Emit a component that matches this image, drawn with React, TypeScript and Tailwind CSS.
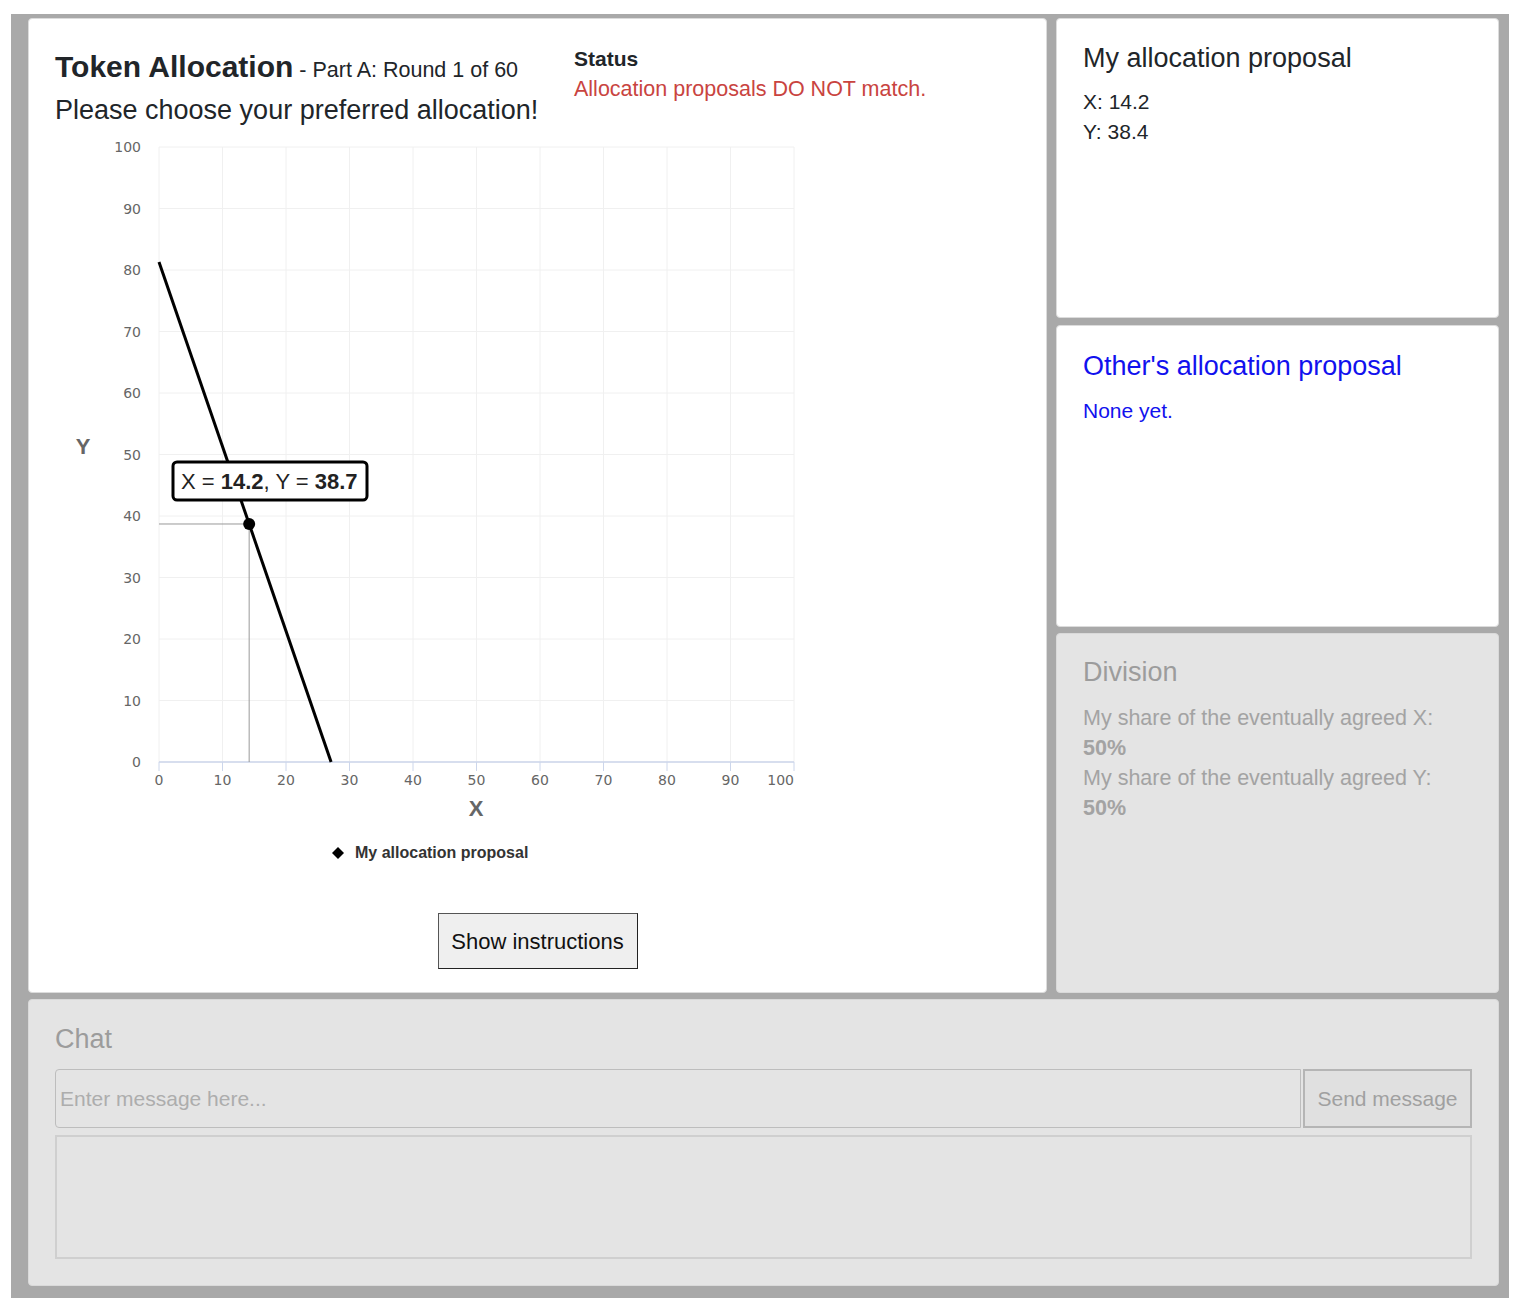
import React from "react";

const FONT = { fontFamily: '"Liberation Sans", Arial, sans-serif' };

// plot box inside the chart svg
const PX0 = 104;
const PY0 = 9;
const PW = 635;
const PH = 615;
const sx = (v: number) => PX0 + (v / 100) * PW;
const sy = (v: number) => PY0 + PH - (v / 100) * PH;
const TICKS = [0, 10, 20, 30, 40, 50, 60, 70, 80, 90, 100];

function AllocationChart() {
  const px = 14.2;
  const py = 38.7;
  return (
    <svg width={760} height={740} className="block" style={{ fontFamily: '"DejaVu Sans", sans-serif' }}>
      {/* grid */}
      {TICKS.map((t) => (
        <line key={`v${t}`} x1={sx(t)} x2={sx(t)} y1={PY0} y2={PY0 + PH} stroke="#f0f0f0" strokeWidth={1} />
      ))}
      {TICKS.map((t) => (
        <line key={`h${t}`} x1={PX0} x2={PX0 + PW} y1={sy(t)} y2={sy(t)} stroke="#f0f0f0" strokeWidth={1} />
      ))}
      {/* x axis */}
      <line x1={PX0} x2={PX0 + PW} y1={PY0 + PH} y2={PY0 + PH} stroke="#ccd6eb" strokeWidth={1.5} />
      {TICKS.map((t) => (
        <line key={`t${t}`} x1={sx(t)} x2={sx(t)} y1={PY0 + PH} y2={PY0 + PH + 9} stroke="#ccd6eb" strokeWidth={1} />
      ))}
      {/* tick labels */}
      {TICKS.map((t) => (
        <text key={`yl${t}`} x={86} y={sy(t) + 5} textAnchor="end" fontSize={14} fill="#666">
          {t}
        </text>
      ))}
      {TICKS.map((t) => (
        <text
          key={`xl${t}`}
          x={sx(t)}
          y={647}
          textAnchor={t === 100 ? "end" : "middle"}
          fontSize={14}
          fill="#666"
        >
          {t}
        </text>
      ))}
      {/* axis titles */}
      <text x={421} y={678} textAnchor="middle" fontSize={22} fontWeight="bold" fill="#666" style={FONT}>
        X
      </text>
      <text x={28} y={316} textAnchor="middle" fontSize={22} fontWeight="bold" fill="#666" style={FONT}>
        Y
      </text>

      {/* budget line */}
      <line x1={sx(0)} y1={sy(81.3)} x2={sx(27.1)} y2={sy(0)} stroke="#000" strokeWidth={3} />
      {/* crosshair */}
      <line x1={PX0} x2={sx(px)} y1={sy(py)} y2={sy(py)} stroke="#999" strokeWidth={1} />
      <line x1={sx(px)} x2={sx(px)} y1={sy(py)} y2={PY0 + PH} stroke="#999" strokeWidth={1} />
      <circle cx={sx(px)} cy={sy(py)} r={6} fill="#000" />

      {/* tooltip */}
      <rect x={118} y={324} width={194} height={38} rx={4} fill="#fff" stroke="#000" strokeWidth={3} />
      <text x={126} y={351} fontSize={22} fill="#222" style={FONT}>
        X = <tspan fontWeight="bold">14.2</tspan>, Y = <tspan fontWeight="bold">38.7</tspan>
      </text>

      {/* legend */}
      <path d="M283 709 L289 715 L283 721 L277 715 Z" fill="#000" />
      <text x={300} y={720} fontSize={16} fontWeight="bold" fill="#333" style={FONT}>
        My allocation proposal
      </text>
    </svg>
  );
}

export default function App() {
  return (
    <div className="min-h-screen bg-white pt-[14px] pl-[11px]" style={FONT}>
      <div className="w-[1498px] h-[1284px] bg-[#a9a9a9] pt-[4px] pl-[17px] pr-[10px] pb-[12px] flex flex-col gap-[6px]">
        <div className="flex gap-[9px] h-[975px]">
          {/* main panel */}
          <div className="w-[1019px] bg-white rounded-[4px] border border-[#dcdcdc] pt-[25px] pl-[26px] flex flex-col">
            <div className="flex text-[#212529]">
              <div className="w-[519px] pt-[5px]">
                <div className="leading-[36px] whitespace-nowrap">
                  <span className="text-[30px] font-bold">Token Allocation</span>
                  <span className="text-[21.5px]"> - Part A: Round 1 of 60</span>
                </div>
                <div className="mt-[3px] text-[27px] leading-[34px] whitespace-nowrap">
                  Please choose your preferred allocation!
                </div>
              </div>
              <div>
                <div className="text-[21px] font-bold leading-[30px]">Status</div>
                <div className="text-[21.5px] leading-[30px] text-[#c9443f]">Allocation proposals DO NOT match.</div>
              </div>
            </div>
            <div className="mt-[11px]">
              <AllocationChart />
            </div>
            <div className="flex justify-center pr-[26px] mt-[35px]">
              <button className="h-[56px] w-[200px] bg-[#efefef] border border-[#555] border-b-[#222] border-r-[#222] text-[22px] text-[#111]">
                Show instructions
              </button>
            </div>
          </div>

          {/* right column */}
          <div className="w-[443px] flex flex-col">
            <div className="h-[300px] bg-white rounded-[4px] border border-[#dcdcdc] pt-[22px] pl-[26px] text-[#212529]">
              <div className="text-[27px] leading-[34px]">My allocation proposal</div>
              <div className="mt-[12px] text-[21px] leading-[30px]">
                <div>X: 14.2</div>
                <div>Y: 38.4</div>
              </div>
            </div>
            <div className="mt-[7px] h-[302px] bg-white rounded-[4px] border border-[#dcdcdc] pt-[23px] pl-[26px] text-[#1111ee]">
              <div className="text-[27px] leading-[34px]">Other's allocation proposal</div>
              <div className="mt-[13px] text-[21px] leading-[30px]">None yet.</div>
            </div>
            <div className="mt-[6px] flex-1 bg-[#e4e4e4] rounded-[4px] border border-[#d9d9d9] pt-[21px] pl-[26px] text-[#a3a3a3]">
              <div className="text-[27px] leading-[34px] text-[#9c9c9c]">Division</div>
              <div className="mt-[14px] text-[21.5px] leading-[30px]">
                <div>My share of the eventually agreed X:</div>
                <div className="font-bold">50%</div>
                <div>My share of the eventually agreed Y:</div>
                <div className="font-bold">50%</div>
              </div>
            </div>
          </div>
        </div>

        {/* chat */}
        <div className="flex-1 bg-[#e4e4e4] rounded-[4px] border border-[#d9d9d9] pt-[22px] pl-[26px] pr-[26px]">
          <div className="text-[27px] leading-[34px] text-[#9c9c9c]">Chat</div>
          <div className="mt-[13px] flex h-[59px]">
            <input
              disabled
              placeholder="Enter message here..."
              className="flex-1 h-full bg-[#e4e4e4] border border-[#bdbdbd] rounded-l-[4px] px-[4px] text-[21px] placeholder:text-[#adadad]"
              style={FONT}
            />
            <button className="ml-[2px] w-[169px] h-full bg-[#e0e0e0] border-2 border-[#b5b5b5] text-[21px] text-[#a0a0a0]">
              Send message
            </button>
          </div>
          <div className="mt-[7px] h-[124px] border-2 border-[#cfcfcf]" />
        </div>
      </div>
    </div>
  );
}
